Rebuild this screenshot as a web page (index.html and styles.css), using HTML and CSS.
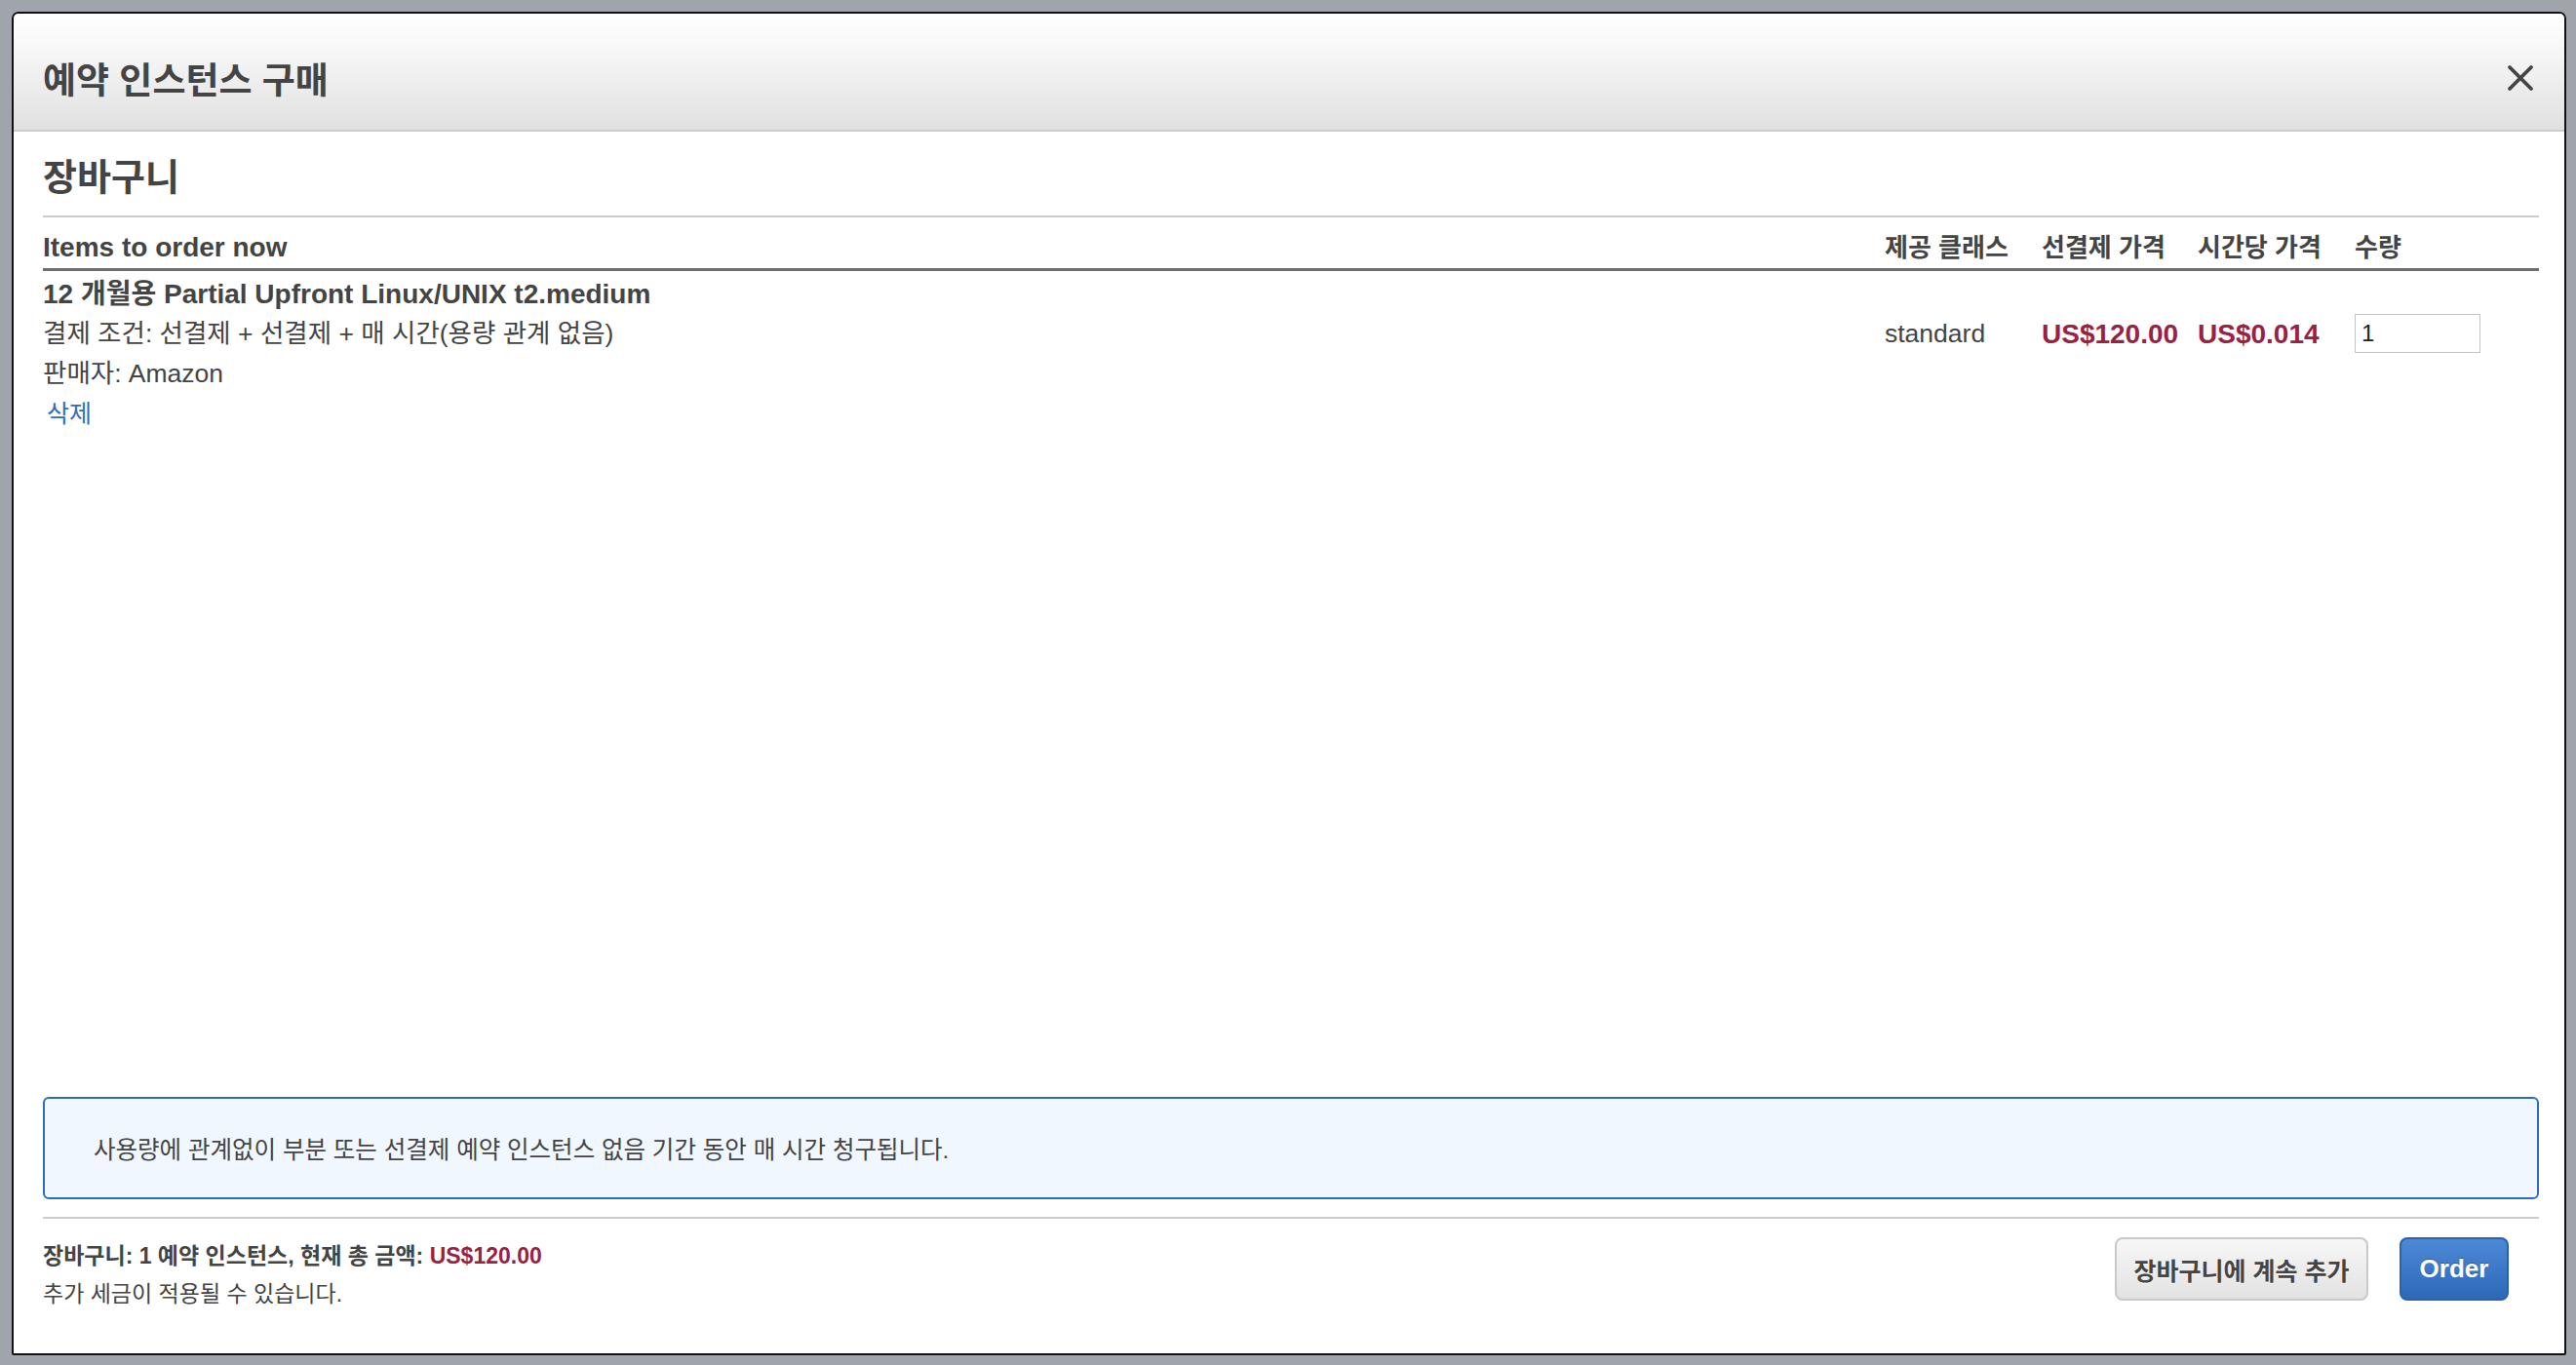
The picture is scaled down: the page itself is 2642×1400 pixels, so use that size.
FILE: index.html
```html
<!DOCTYPE html>
<html lang="ko">
<head>
    <meta charset="UTF-8">
    <meta name="viewport" content="width=device-width, initial-scale=1.0">
    <title>예약 인스턴스 구매</title>
    <link rel="stylesheet" href="styles.css">
</head>
<body>
    <div class="modal">
        <div class="modal-header">
            <h2>예약 인스턴스 구매</h2>
            <button class="close" aria-label="닫기">
                <svg width="28" height="28" viewBox="0 0 28 28">
                    <path d="M3 3 L25 25 M25 3 L3 25" stroke="#444" stroke-width="3.8" stroke-linecap="round" fill="none"/>
                </svg>
            </button>
        </div>

        <div class="modal-body">
            <div class="cart-title">
                <h3>장바구니</h3>
            </div>

            <div class="cart-table">
                <div class="row head">
                    <div class="c-item">Items to order now</div>
                    <div class="c-col">제공 클래스</div>
                    <div class="c-col">선결제 가격</div>
                    <div class="c-col">시간당 가격</div>
                    <div class="c-col">수량</div>
                </div>
                <div class="row item">
                    <div class="c-item">
                        <div class="item-name">12 개월용 Partial Upfront Linux/UNIX t2.medium</div>
                        <div>결제 조건: 선결제 + 선결제 + 매 시간(용량 관계 없음)</div>
                        <div>판매자: Amazon</div>
                        <a href="#" class="remove">삭제</a>
                    </div>
                    <div class="c-col val">standard</div>
                    <div class="c-col val price">US$120.00</div>
                    <div class="c-col val price">US$0.014</div>
                    <div class="c-col val"><input type="text" class="qty" value="1"></div>
                </div>
            </div>

            <div class="spacer"></div>

            <div class="notice">사용량에 관계없이 부분 또는 선결제 예약 인스턴스 없음 기간 동안 매 시간 청구됩니다.</div>

            <div class="modal-footer">
                <div class="summary">
                    <div class="summary-total">장바구니: 1 예약 인스턴스, 현재 총 금액: <span class="price">US$120.00</span></div>
                    <div>추가 세금이 적용될 수 있습니다.</div>
                </div>
                <div class="actions">
                    <button class="btn">장바구니에 계속 추가</button>
                    <button class="btn btn-primary">Order</button>
                </div>
            </div>
        </div>
    </div>
</body>
</html>
```

FILE: styles.css
```css
html, body {
    height: 100%;
}
body {
    margin: 0;
    background-color: #a0a4ab;
    font-family: "Liberation Sans", "Noto Sans CJK KR", sans-serif;
    color: #444;
    overflow: hidden;
}
.modal {
    box-sizing: border-box;
    margin: 12px 10px 0 12px;
    height: 1378px;
    background-color: #fff;
    border: 2px solid #111;
    border-radius: 7px 7px 2px 2px;
    overflow: hidden;
    display: flex;
    flex-direction: column;
}
.modal-header {
    height: 121px;
    box-sizing: border-box;
    padding: 12px 31px 0 30px;
    display: flex;
    align-items: center;
    justify-content: space-between;
    background: linear-gradient(to bottom, #ffffff 0%, #f6f6f6 35%, #e0e0e0 100%);
    border-bottom: 2px solid #cccccc;
}
.modal-header h2 {
    margin: 0;
    font-size: 37px;
    font-weight: bold;
    color: #444;
}
.close {
    background: none;
    border: none;
    padding: 0;
    width: 28px;
    height: 28px;
    cursor: pointer;
}
.close svg {
    display: block;
}
.modal-body {
    flex: 1;
    display: flex;
    flex-direction: column;
    padding: 0 26px 0 30px;
}
.cart-title {
    margin-top: 25px;
    padding-bottom: 17px;
    border-bottom: 2px solid #cccccc;
}
.cart-title h3 {
    margin: 0;
    font-size: 38px;
    line-height: 44px;
    font-weight: bold;
}
.row {
    display: grid;
    grid-template-columns: 1fr 161px 160px 161px 189px;
}
.row.head {
    padding: 14px 0 4px;
    line-height: 34px;
    font-weight: bold;
    border-bottom: 3px solid #6d6e71;
}
.row.head .c-item {
    font-size: 28px;
}
.row.head .c-col {
    font-size: 26px;
}
.row.item {
    padding-top: 3px;
    font-size: 26.5px;
    line-height: 41px;
}
.item-name {
    font-size: 28px;
    font-weight: bold;
}
.remove {
    display: inline-block;
    margin-left: 4px;
    color: #2a6fc3;
    text-decoration: none;
    font-size: 25px;
}
.remove:hover {
    text-decoration: underline;
}
.c-col.val {
    padding-top: 41px;
}
.price {
    color: #992244;
    font-weight: bold;
}
.c-col.price {
    font-size: 28px;
}
.qty {
    display: block;
    box-sizing: border-box;
    width: 129px;
    height: 40px;
    padding: 0 6px;
    border: 1px solid #c4c4c4;
    font-family: "Liberation Sans", sans-serif;
    font-size: 24px;
    color: #222;
}
.spacer {
    flex: 1;
}
.notice {
    box-sizing: border-box;
    height: 105px;
    padding-left: 50px;
    display: flex;
    align-items: center;
    background-color: #f0f7fe;
    border: 2px solid #2e6bb8;
    border-radius: 6px;
    font-size: 24.5px;
}
.modal-footer {
    margin-top: 18px;
    border-top: 2px solid #cccccc;
    padding: 19px 31px 41px 0;
    display: flex;
    justify-content: space-between;
    align-items: flex-start;
}
.summary {
    font-size: 23px;
    line-height: 39px;
}
.summary-total {
    font-weight: bold;
}
.actions {
    display: flex;
    gap: 32px;
}
.btn {
    box-sizing: border-box;
    height: 65px;
    width: 260px;
    padding: 0;
    border: 2px solid #c9c9c9;
    border-radius: 8px;
    background: linear-gradient(to bottom, #f7f7f7, #e2e2e2);
    font-family: "Liberation Sans", "Noto Sans CJK KR", sans-serif;
    font-size: 25px;
    font-weight: bold;
    color: #444;
    text-shadow: 0 1px 0 #fff;
    cursor: pointer;
}
.btn-primary {
    width: 112px;
    font-size: 26px;
    color: #fff;
    border-color: #2c62ad;
    background: linear-gradient(to bottom, #4b89d6, #2f68b9);
    text-shadow: 0 -1px 0 rgba(0, 0, 0, 0.3);
}
```
